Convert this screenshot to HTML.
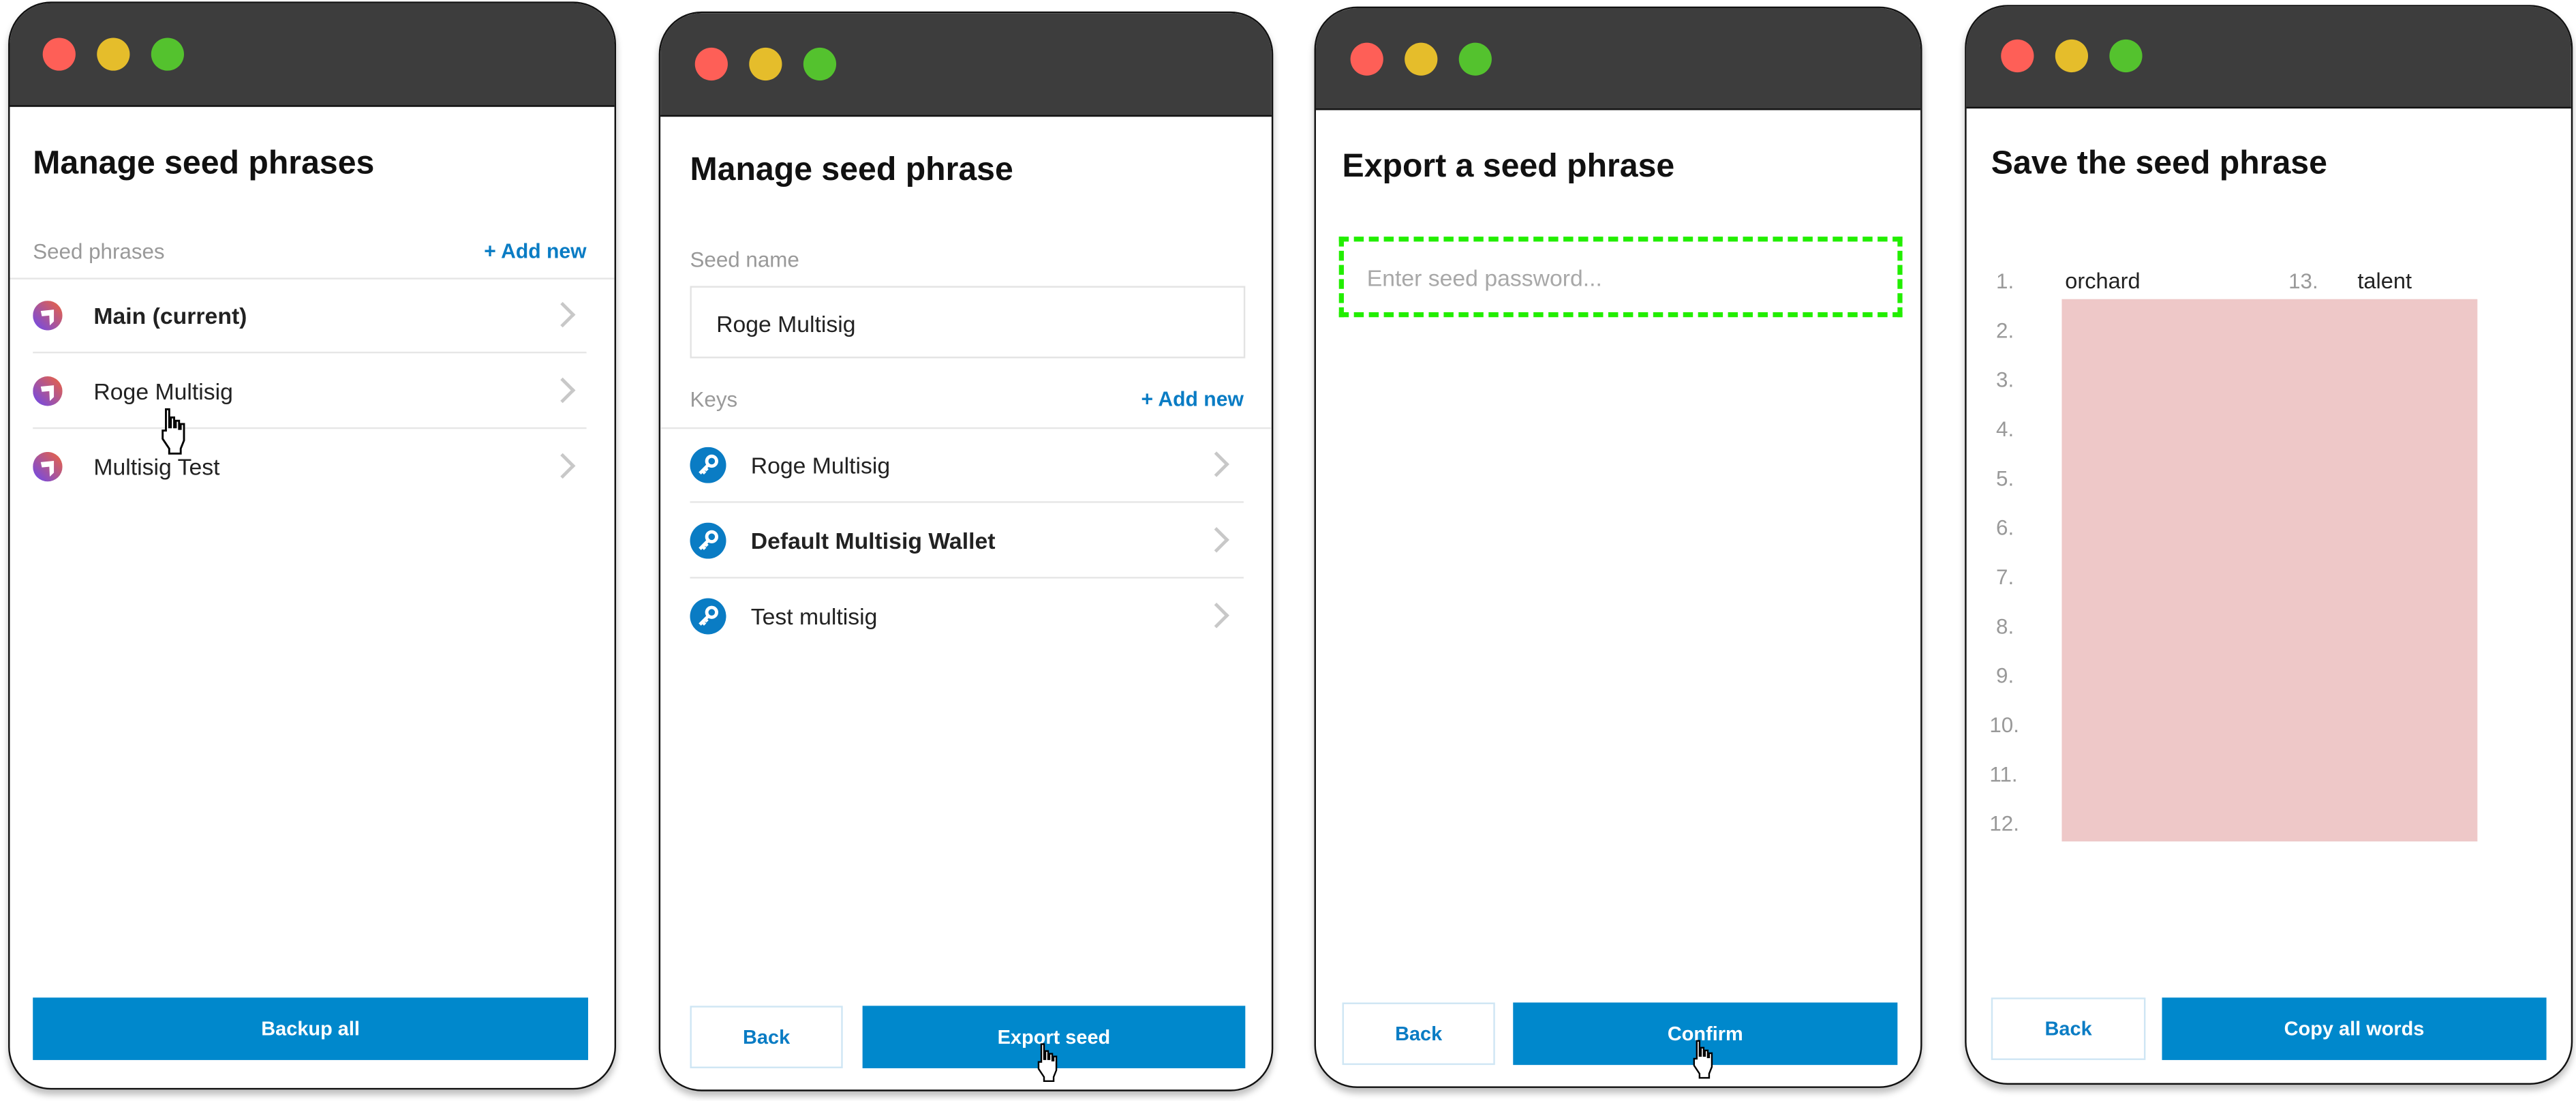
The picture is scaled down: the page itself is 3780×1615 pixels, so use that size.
<!DOCTYPE html>
<html><head><meta charset="utf-8"><style>
*{margin:0;padding:0;box-sizing:border-box}
html,body{width:3780px;height:1614px;background:#fff;overflow:hidden}
#s{position:absolute;left:0;top:0;width:1568px;height:670px;transform:scale(2.41071);transform-origin:0 0;font-family:"Liberation Sans",sans-serif}
.w{position:absolute;border:1.5px solid #111;border-radius:26px;background:#fff;overflow:hidden;box-shadow:0 3px 4px rgba(0,0,0,.25)}
.hd{position:absolute;left:0;top:0;right:0;background:#3d3d3d;border-bottom:1.5px solid #111}
.d{position:absolute;width:20px;height:20px;border-radius:50%}
.r{background:#fe5f57}.y{background:#e5bd2b}.g{background:#54c22e}
.t{position:absolute;font-size:20px;font-weight:bold;color:#111;white-space:nowrap;transform:translateY(-50%)}
.x{position:absolute;white-space:nowrap;transform:translateY(-50%);font-size:14px;color:#222}
.gr{color:#999;font-size:13px}
.bl{color:#0a7cc4;font-weight:bold;font-size:12.5px}
.ln{position:absolute;height:1px;background:#e6e6e6}
.btn{position:absolute;background:#0088cc;color:#fff;font-weight:bold;font-size:12px;display:flex;align-items:center;justify-content:center}
.bk{position:absolute;border:1.5px solid #cfe6f4;color:#0a7cc4;font-weight:bold;font-size:12px;display:flex;align-items:center;justify-content:center;background:#fff}
.ic,.ky{position:absolute}
.ch{position:absolute;width:11px;height:11px;border-right:2px solid #c8c8c8;border-top:2px solid #c8c8c8;transform:rotate(45deg)}
.n{position:absolute;font-size:13px;color:#999;transform:translateY(-50%)}
</style></head><body><div id="s">
<svg width="0" height="0" style="position:absolute"><defs>
<linearGradient id="gg" x1="1" y1="0" x2="0" y2="1"><stop offset="0" stop-color="#f0643a"/><stop offset="1" stop-color="#6a48f0"/></linearGradient>
<symbol id="seed" viewBox="0 0 18 18"><circle cx="9" cy="9" r="9" fill="url(#gg)"/><polygon points="4.8,6.2 12.8,5.4 12.8,12.6 10.3,15 10,9 5.5,9.4" fill="#fff"/></symbol>
<symbol id="key" viewBox="0 0 22 22"><circle cx="11" cy="11" r="11" fill="#0a7cc4"/><circle cx="13.2" cy="8.6" r="3" fill="none" stroke="#fff" stroke-width="2"/><path d="M11.2 10.8 6 16 M7.6 14.4 9.2 16 M9.2 12.8 10.6 14.2" stroke="#fff" stroke-width="2" fill="none"/></symbol>
</defs></svg>

<!-- Window 1 -->
<div class="w" style="left:5px;top:1px;width:370px;height:662px">
 <div class="hd" style="height:63px"></div>
 <div class="d r" style="left:20px;top:21px"></div><div class="d y" style="left:53px;top:21px"></div><div class="d g" style="left:86px;top:21px"></div>
 <div class="t" style="left:14px;top:98px">Manage seed phrases</div>
 <div class="x gr" style="left:14px;top:151px">Seed phrases</div>
 <div class="x bl" style="right:17px;top:151px">+ Add new</div>
 <div class="ln" style="left:0;right:0;top:167px"></div>
 <svg class="ic" style="left:14px;top:181px" width="18" height="18"><use href="#seed"/></svg><div class="x" style="left:51px;top:190px;font-weight:bold">Main (current)</div><div class="ch" style="left:331px;top:184px"></div>
 <div class="ln" style="left:14px;right:17px;top:212px"></div>
 <svg class="ic" style="left:14px;top:227px" width="18" height="18"><use href="#seed"/></svg><div class="x" style="left:51px;top:236px">Roge Multisig</div><div class="ch" style="left:331px;top:230px"></div>
 <div class="ln" style="left:14px;right:17px;top:258px"></div>
 <svg class="ic" style="left:14px;top:273px" width="18" height="18"><use href="#seed"/></svg><div class="x" style="left:51px;top:282px">Multisig Test</div><div class="ch" style="left:331px;top:276px"></div>
 <div class="btn" style="left:14px;top:605px;width:338px;height:38px">Backup all</div>
</div>

<!-- Window 2 -->
<div class="w" style="left:401px;top:7px;width:374px;height:657px">
 <div class="hd" style="height:63px"></div>
 <div class="d r" style="left:21px;top:21px"></div><div class="d y" style="left:54px;top:21px"></div><div class="d g" style="left:87px;top:21px"></div>
 <div class="t" style="left:18px;top:96px">Manage seed phrase</div>
 <div class="x gr" style="left:18px;top:150px">Seed name</div>
 <div style="position:absolute;left:18px;top:166px;width:338px;height:44px;border:1px solid #e3e3e3"></div>
 <div class="x" style="left:34px;top:189px">Roge Multisig</div>
 <div class="x gr" style="left:18px;top:235px">Keys</div>
 <div class="x bl" style="right:17px;top:235px">+ Add new</div>
 <div class="ln" style="left:0;right:0;top:252px"></div>
 <svg class="ky" style="left:18px;top:264px" width="22" height="22"><use href="#key"/></svg><div class="x" style="left:55px;top:275px">Roge Multisig</div><div class="ch" style="left:333px;top:269px"></div>
 <div class="ln" style="left:18px;right:17px;top:297px"></div>
 <svg class="ky" style="left:18px;top:310px" width="22" height="22"><use href="#key"/></svg><div class="x" style="left:55px;top:321px;font-weight:bold">Default Multisig Wallet</div><div class="ch" style="left:333px;top:315px"></div>
 <div class="ln" style="left:18px;right:17px;top:343px"></div>
 <svg class="ky" style="left:18px;top:356px" width="22" height="22"><use href="#key"/></svg><div class="x" style="left:55px;top:367px">Test multisig</div><div class="ch" style="left:333px;top:361px"></div>
 <div class="bk" style="left:18px;top:604px;width:93px;height:38px">Back</div>
 <div class="btn" style="left:123px;top:604px;width:233px;height:38px">Export seed</div>
</div>

<!-- Window 3 -->
<div class="w" style="left:800px;top:4px;width:370px;height:658px">
 <div class="hd" style="height:62px"></div>
 <div class="d r" style="left:21px;top:21px"></div><div class="d y" style="left:54px;top:21px"></div><div class="d g" style="left:87px;top:21px"></div>
 <div class="t" style="left:16px;top:97px">Export a seed phrase</div>
 <div style="position:absolute;left:14px;top:139px;width:343px;height:49px;border:3px dashed #22ee00"></div>
 <div class="x" style="left:31px;top:164px;color:#a8a8a8">Enter seed password...</div>
 <div class="bk" style="left:16px;top:605px;width:93px;height:38px">Back</div>
 <div class="btn" style="left:120px;top:605px;width:234px;height:38px">Confirm</div>
</div>

<!-- Window 4 -->
<div class="w" style="left:1196px;top:3px;width:370px;height:657px">
 <div class="hd" style="height:62px"></div>
 <div class="d r" style="left:21px;top:20px"></div><div class="d y" style="left:54px;top:20px"></div><div class="d g" style="left:87px;top:20px"></div>
 <div class="t" style="left:15px;top:96px">Save the seed phrase</div>
 <div style="position:absolute;left:58px;top:178px;width:253px;height:330px;background:#eec8c8"></div>
 <div class="n" style="left:18px;top:167px">1.</div>
 <div class="n" style="left:18px;top:197px">2.</div>
 <div class="n" style="left:18px;top:227px">3.</div>
 <div class="n" style="left:18px;top:257px">4.</div>
 <div class="n" style="left:18px;top:287px">5.</div>
 <div class="n" style="left:18px;top:317px">6.</div>
 <div class="n" style="left:18px;top:347px">7.</div>
 <div class="n" style="left:18px;top:377px">8.</div>
 <div class="n" style="left:18px;top:407px">9.</div>
 <div class="n" style="left:14px;top:437px">10.</div>
 <div class="n" style="left:14px;top:467px">11.</div>
 <div class="n" style="left:14px;top:497px">12.</div>
 <div class="x" style="left:60px;top:167px;font-size:13.5px">orchard</div>
 <div class="n" style="left:196px;top:167px">13.</div>
 <div class="x" style="left:238px;top:167px;font-size:13.5px">talent</div>
 <div class="bk" style="left:15px;top:603px;width:94px;height:38px">Back</div>
 <div class="btn" style="left:119px;top:603px;width:234px;height:38px">Copy all words</div>
</div>

<!-- cursors -->
<svg style="position:absolute;left:94px;top:248px" width="24" height="30" viewBox="0 0 24 30"><path d="M7 1h2v11h1V6h2v6h1V8h2v5h1v-3h2v10l-2 5v3H9v-3l-4-6V14h2z" fill="#fff" stroke="#000" stroke-width="1.2"/></svg>
<svg style="position:absolute;left:628px;top:634px" width="20" height="26" viewBox="0 0 24 30"><path d="M7 1h2v11h1V6h2v6h1V8h2v5h1v-3h2v10l-2 5v3H9v-3l-4-6V14h2z" fill="#fff" stroke="#000" stroke-width="1.2"/></svg>
<svg style="position:absolute;left:1027px;top:632px" width="20" height="26" viewBox="0 0 24 30"><path d="M7 1h2v11h1V6h2v6h1V8h2v5h1v-3h2v10l-2 5v3H9v-3l-4-6V14h2z" fill="#fff" stroke="#000" stroke-width="1.2"/></svg>
</div></body></html>
